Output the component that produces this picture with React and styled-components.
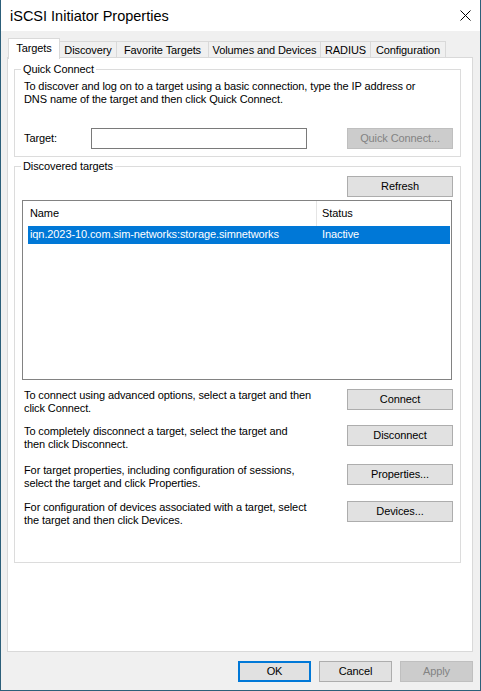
import React from 'react';
import styled, { createGlobalStyle } from 'styled-components';

const GlobalStyle = createGlobalStyle`
  * { box-sizing: border-box; }
  html, body { margin: 0; padding: 0; background: #1b4f6a; }
  body {
    font-family: "Liberation Sans", Arial, sans-serif;
    font-size: 11px;
    letter-spacing: -0.1px;
    color: #000;
  }
`;

const Window = styled.div`
  width: 481px;
  height: 691px;
  display: flex;
  flex-direction: column;
  background: #f0f0f0;
  border: 1px solid #2c5f7a;
  border-top: none;
`;

const TitleBar = styled.div`
  height: 31px;
  flex: none;
  display: flex;
  align-items: center;
  justify-content: space-between;
  padding: 0 9px 0 9px;
  background: #fff;
`;

const Title = styled.span`
  font-size: 14.5px;
  letter-spacing: 0;
  line-height: 20px;
  margin-top: 1px;
`;

const Body = styled.div`
  flex: 1;
  display: flex;
  flex-direction: column;
  padding: 7px 7px 0 6px;
`;

const TabRow = styled.div`
  display: flex;
  align-items: flex-end;
  padding-left: 1px;
  position: relative;
  z-index: 1;
`;

const Tab = styled.div`
  width: ${p => p.$w}px;
  height: ${p => (p.$active ? 21 : 16)}px;
  margin-bottom: ${p => (p.$active ? -2 : 0)}px;
  margin-left: ${p => (p.$first ? 0 : -1)}px;
  padding-top: ${p => (p.$active ? 3 : 2)}px;
  text-align: center;
  line-height: 13px;
  white-space: nowrap;
  border: 1px solid #d9d9d9;
  border-bottom: none;
  background: ${p => (p.$active ? '#fff' : '#f0f0f0')};
`;

const Panel = styled.div`
  flex: 1;
  background: #fff;
  border: 1px solid #d9d9d9;
`;

const Group = styled.div`
  position: relative;
  margin: ${p => p.$mt}px 11px 0 6px;
  padding: ${p => p.$pad};
  border: 1px solid #dcdcdc;
`;

const GroupLabel = styled.span`
  position: absolute;
  top: -8px;
  left: 6px;
  padding: 0 2px;
  line-height: 14px;
  background: #fff;
`;

const Text = styled.p`
  margin: 0;
  padding-left: ${p => p.$indent || 0}px;
  line-height: 13px;
  white-space: nowrap;
`;

const TargetRow = styled.div`
  display: flex;
  align-items: center;
  margin-top: 22px;
`;

const FieldLabel = styled.span`
  width: 67px;
  line-height: 13px;
`;

const Input = styled.div`
  width: 216px;
  height: 21px;
  border: 1px solid #7a7a7a;
  background: #fff;
`;

const Button = styled.div`
  width: ${p => p.$w || 106}px;
  height: 21px;
  margin-left: ${p => (p.$push ? 'auto' : '0')};
  display: flex;
  align-items: center;
  justify-content: center;
  line-height: 13px;
  flex: none;
  white-space: nowrap;
  background: ${p => (p.$disabled ? '#cccccc' : '#e1e1e1')};
  color: ${p => (p.$disabled ? '#838383' : '#000')};
  border: ${p =>
    p.$default ? '2px solid #0078d7' : `1px solid ${p.$disabled ? '#bfbfbf' : '#adadad'}`};
`;

const RightBar = styled.div`
  display: flex;
  justify-content: flex-end;
`;

const List = styled.div`
  width: 430px;
  height: 180px;
  margin-top: 3px;
  border: 1px solid #828282;
  background: #fff;
`;

const HeaderRow = styled.div`
  display: grid;
  grid-template-columns: 294px 1fr;
  height: 25px;
`;

const HeaderCell = styled.div`
  padding: 6px 0 0 ${p => p.$pl}px;
  line-height: 13px;
  border-right: ${p => (p.$divider ? '1px solid #e5e5e5' : 'none')};
`;

const ItemRow = styled.div`
  display: grid;
  grid-template-columns: 288px 1fr;
  height: 18px;
  margin: 0 1px 0 5px;
  background: ${p => (p.$selected ? '#0078d7' : 'transparent')};
  color: ${p => (p.$selected ? '#fff' : '#000')};
`;

const ItemCell = styled.div`
  padding: 2px 0 0 ${p => p.$pl}px;
  line-height: 13px;
  white-space: nowrap;
`;

const ActionRow = styled.div`
  display: flex;
  align-items: flex-start;
  justify-content: space-between;
  margin-top: ${p => p.$mt}px;
`;

const Footer = styled.div`
  height: 38px;
  flex: none;
  display: flex;
  justify-content: flex-end;
  gap: 8px;
  padding-top: 9px;
`;

const CloseIcon = () => (
  <svg width="11" height="11" viewBox="0 0 11 11">
    <path d="M0.5 0.5 L10.5 10.5 M10.5 0.5 L0.5 10.5" stroke="#000" strokeWidth="1" />
  </svg>
);

const tabs = [
  { label: 'Targets', w: 52 },
  { label: 'Discovery', w: 58 },
  { label: 'Favorite Targets', w: 93 },
  { label: 'Volumes and Devices', w: 113 },
  { label: 'RADIUS', w: 51 },
  { label: 'Configuration', w: 76 },
];

const actions = [
  {
    mt: 9,
    lines: ['To connect using advanced options, select a target and then', 'click Connect.'],
    button: 'Connect',
  },
  {
    mt: 10,
    lines: ['To completely disconnect a target, select the target and', 'then click Disconnect.'],
    button: 'Disconnect',
  },
  {
    mt: 13,
    lines: ['For target properties, including configuration of sessions,', 'select the target and click Properties.'],
    button: 'Properties...',
  },
  {
    mt: 11,
    lines: ['For configuration of devices associated with a target, select', 'the target and then click Devices.'],
    button: 'Devices...',
  },
];

export default function App() {
  return (
    <>
      <GlobalStyle />
      <Window>
        <TitleBar>
          <Title>iSCSI Initiator Properties</Title>
          <CloseIcon />
        </TitleBar>
        <Body>
          <TabRow>
            {tabs.map((t, i) => (
              <Tab key={t.label} $w={t.w} $active={i === 0} $first={i === 0}>
                {t.label}
              </Tab>
            ))}
          </TabRow>
          <Panel>
            <Group $mt={11} $pad="10px 7px 7px 9px">
              <GroupLabel>Quick Connect</GroupLabel>
              <Text>
                To discover and log on to a target using a basic connection, type the IP address or
                <br />
                DNS name of the target and then click Quick Connect.
              </Text>
              <TargetRow>
                <FieldLabel>Target:</FieldLabel>
                <Input />
                <Button $push $disabled>Quick Connect...</Button>
              </TargetRow>
            </Group>

            <Group $mt={9} $pad="9px 7px 35px 7px">
              <GroupLabel>Discovered targets</GroupLabel>
              <RightBar>
                <Button>Refresh</Button>
              </RightBar>
              <List>
                <HeaderRow>
                  <HeaderCell $pl={7} $divider>Name</HeaderCell>
                  <HeaderCell $pl={5}>Status</HeaderCell>
                </HeaderRow>
                <ItemRow $selected>
                  <ItemCell $pl={2}>iqn.2023-10.com.sim-networks:storage.simnetworks</ItemCell>
                  <ItemCell $pl={6}>Inactive</ItemCell>
                </ItemRow>
              </List>
              {actions.map(a => (
                <ActionRow key={a.button} $mt={a.mt}>
                  <Text $indent={2}>
                    {a.lines[0]}
                    <br />
                    {a.lines[1]}
                  </Text>
                  <Button>{a.button}</Button>
                </ActionRow>
              ))}
            </Group>
          </Panel>
          <Footer>
            <Button $w={73} $default>OK</Button>
            <Button $w={73}>Cancel</Button>
            <Button $w={73} $disabled>Apply</Button>
          </Footer>
        </Body>
      </Window>
    </>
  );
}
